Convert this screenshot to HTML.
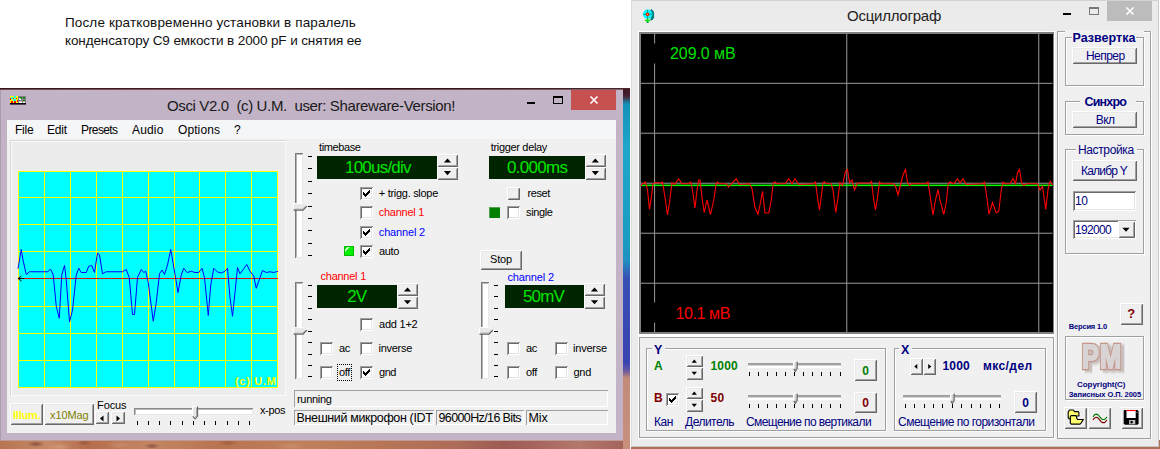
<!DOCTYPE html>
<html lang="ru"><head><meta charset="utf-8"><title>Osci</title>
<style>
html,body{margin:0;padding:0;}
body{width:1160px;height:449px;overflow:hidden;background:#fff;position:relative;font-family:"Liberation Sans",sans-serif;}
div,span,svg{position:absolute;box-sizing:border-box;}
.t{white-space:pre;}
.cb{background:#fff;box-shadow:inset 1px 1px 0 #a0a0a0,inset -1px -1px 0 #fff,inset 2px 2px 0 #696969,inset -2px -2px 0 #e3e3e3;}
.btn{background:#f0f0f0;box-shadow:inset 1px 1px 0 #fff,inset -1px -1px 0 #696969,inset 2px 2px 0 #e9e9e9,inset -2px -2px 0 #a0a0a0;}
.sunk{box-shadow:inset 1px 1px 0 #a0a0a0,inset -1px -1px 0 #fff;}
.sunk2{background:#fff;box-shadow:inset 1px 1px 0 #a0a0a0,inset -1px -1px 0 #fff,inset 2px 2px 0 #696969,inset -2px -2px 0 #e3e3e3;}
.grp{box-shadow:inset 1px 1px 0 #a0a0a0,inset -1px -1px 0 #fff,inset 2px 2px 0 #fff;border-right:0;}
.disp{background:#002400;}

</style></head>
<body>
<div class="" style="left:0px;top:88px;width:630px;height:361px;background:radial-gradient(ellipse 9px 3px at 36px 356px,rgba(90,40,30,.55),transparent),radial-gradient(ellipse 7px 2.5px at 84px 355px,rgba(100,50,35,.4),transparent),radial-gradient(ellipse 8px 3px at 152px 358px,rgba(90,40,30,.5),transparent),radial-gradient(ellipse 10px 3px at 228px 355px,rgba(110,55,40,.35),transparent),radial-gradient(ellipse 12px 4px at 60px 359px,rgba(225,170,140,.5),transparent),radial-gradient(ellipse 14px 4px at 120px 357px,rgba(220,165,135,.4),transparent),radial-gradient(ellipse 16px 4px at 290px 358px,rgba(215,160,130,.4),transparent),linear-gradient(90deg,#b87452 0,#c68a68 8%,#b46c4c 14%,#c48664 24%,#b8734f 35%,#c0805c 48%,#b87656 60%,#ae6c58 72%,#9c5c54 80%,#a86860 86%,#b4786c 92%,#a06058 100%);"></div>
<div class="" style="left:622.5px;top:88px;width:7.5px;height:361px;background:linear-gradient(180deg,#3a1820 0px,#4a2030 8px,#1590b8 16px,#1fa6c8 60px,#1b9cc0 150px,#2090c0 172px,#3850b4 190px,#3a44b0 275px,#6a5aa0 283px,#c48c78 290px,#c8907c 361px);"></div>
<div class="" style="left:631px;top:440px;width:529px;height:9px;background:#b07058;"></div>
<div class="" style="left:0px;top:89px;width:622.5px;height:351px;background:#c2b3c6;box-shadow:inset 1px 0 0 #a99cad;"></div>
<div class="" style="left:0px;top:440px;width:622.5px;height:1px;background:#bd9a94;"></div>
<div class="" style="left:0px;top:88px;width:630px;height:1px;background:linear-gradient(90deg,#3a1418,#4a2024 40%,#2a1014 60%,#50282c);"></div>
<div class="" style="left:0px;top:89px;width:622.5px;height:1px;background:linear-gradient(90deg,#6a4a50,#7a5a60 40%,#60444c 60%,#806068);"></div>
<svg style="left:10px;top:96px;" width="16" height="9" viewBox="0 0 16 9"><rect x="0" y="0" width="8" height="7" fill="#ffff00"/><rect x="8" y="0" width="8" height="7" fill="#808080"/><rect x="1" y="1" width="2" height="2" fill="#00ffff"/><rect x="4" y="0" width="2" height="2" fill="#00ffff"/><rect x="3" y="3" width="3" height="2" fill="#00ffff"/><rect x="0" y="2" width="1" height="2" fill="#f00"/><rect x="3" y="2" width="1" height="1" fill="#f00"/><rect x="6" y="2" width="1" height="1" fill="#f00"/><rect x="1" y="5" width="2" height="2" fill="#f00"/><rect x="4" y="5" width="2" height="2" fill="#f00"/><rect x="7" y="4" width="1" height="2" fill="#f00"/><rect x="10" y="1" width="2" height="1.5" fill="#008000"/><rect x="13" y="1" width="2" height="1.5" fill="#008000"/><rect x="13" y="4" width="2" height="1.5" fill="#008000"/><rect x="9" y="2.5" width="2" height="1.5" fill="#fff"/><rect x="9" y="5.5" width="3" height="1.5" fill="#fff"/><rect x="13" y="5.5" width="2" height="1.5" fill="#fff"/><rect x="0" y="7" width="16" height="1.6" fill="#000"/></svg>
<span class="t" style="left:167px;top:96.92px;font-size:15px;color:#1a1a1a;line-height:17.23px;letter-spacing:-0.361px;">Osci V2.0  (c) U.M.  user: Shareware-Version!</span>
<div class="" style="left:526.5px;top:102px;width:8px;height:2px;background:#000;"></div>
<div class="" style="left:553px;top:96px;width:10px;height:8px;border:1px solid #000;border-top-width:2px;"></div>
<div class="" style="left:571px;top:90px;width:45px;height:19.5px;background:#c75050;"></div>
<svg style="left:589px;top:94.5px;" width="10" height="10" viewBox="0 0 10 10"><path d="M1.5 1.5 L8.5 8.5 M8.5 1.5 L1.5 8.5" stroke="#fff" stroke-width="1.6" fill="none"/></svg>
<div class="" style="left:7px;top:119.5px;width:608.5px;height:313.7px;background:#f0f0f0;"></div>
<div class="" style="left:7px;top:119.5px;width:608.5px;height:19.5px;background:#f5f6f7;"></div>
<span class="t" style="left:15px;top:123.54px;font-size:12px;color:#000;line-height:13.79px;letter-spacing:-0.209px;">File</span>
<span class="t" style="left:47px;top:123.54px;font-size:12px;color:#000;line-height:13.79px;letter-spacing:-0.169px;">Edit</span>
<span class="t" style="left:81px;top:123.54px;font-size:12px;color:#000;line-height:13.79px;letter-spacing:-0.597px;">Presets</span>
<span class="t" style="left:132px;top:123.54px;font-size:12px;color:#000;line-height:13.79px;letter-spacing:0.162px;">Audio</span>
<span class="t" style="left:178px;top:123.54px;font-size:12px;color:#000;line-height:13.79px;letter-spacing:0.092px;">Options</span>
<span class="t" style="left:234px;top:123.54px;font-size:12px;color:#000;line-height:13.79px;">?</span>
<div class="" style="left:10px;top:140px;width:276px;height:255.5px;box-shadow:inset 1px 1px 0 #dadada,inset -1px -1px 0 #fafafa,inset 2px 2px 0 #fbfbfb;background:#ececec;"></div>
<svg style="left:17px;top:170px;" width="262" height="219" viewBox="0 0 262 219"><rect x="1" y="1" width="260" height="217" fill="#00ffff"/><rect x="1" y="1" width="1" height="217" fill="#ffff00"/><rect x="27" y="1" width="1" height="217" fill="#ffff00"/><rect x="53" y="1" width="1" height="217" fill="#ffff00"/><rect x="79" y="1" width="1" height="217" fill="#ffff00"/><rect x="105" y="1" width="1" height="217" fill="#ffff00"/><rect x="131" y="1" width="1" height="217" fill="#ffff00"/><rect x="157" y="1" width="1" height="217" fill="#ffff00"/><rect x="182" y="1" width="1" height="217" fill="#ffff00"/><rect x="208" y="1" width="1" height="217" fill="#ffff00"/><rect x="234" y="1" width="1" height="217" fill="#ffff00"/><rect x="260" y="1" width="1" height="217" fill="#ffff00"/><rect x="1" y="1" width="260" height="1" fill="#ffff00"/><rect x="1" y="27" width="260" height="1" fill="#ffff00"/><rect x="1" y="54" width="260" height="1" fill="#ffff00"/><rect x="1" y="81" width="260" height="1" fill="#ffff00"/><rect x="1" y="136" width="260" height="1" fill="#ffff00"/><rect x="1" y="163" width="260" height="1" fill="#ffff00"/><rect x="1" y="190" width="260" height="1" fill="#ffff00"/><rect x="1" y="217" width="260" height="1" fill="#ffff00"/><rect x="1" y="108" width="260" height="1" fill="#d81010"/><path d="M1 108.5 L4.5 106 M1 108.5 L4.5 111 M1 108.5 H7" stroke="#200000" stroke-width="1" fill="none"/><polyline points="1.00,98.75 4.25,79.50 6.00,90.00 9.25,104.50 12.50,101.75 30.50,101.75 33.75,99.25 36.25,105.00 39.25,136.25 42.25,148.25 44.75,105.00 47.50,95.50 49.25,110.00 52.50,152.00 55.50,140.00 59.25,105.00 61.75,98.25 64.25,102.50 69.25,102.50 71.75,96.25 74.75,95.50 77.50,102.50 80.50,83.00 82.50,85.00 85.50,103.75 89.25,101.75 105.50,101.75 109.25,99.50 112.25,107.50 115.50,144.50 117.50,144.50 120.50,107.50 124.25,99.50 126.75,102.50 128.75,101.25 131.25,112.50 136.25,151.25 139.25,132.50 142.50,103.75 145.00,100.00 147.50,104.50 150.50,95.00 153.75,79.50 156.00,92.50 161.00,122.50 164.25,105.00 166.75,98.25 170.00,102.50 174.25,101.25 178.00,102.50 181.75,102.50 185.00,98.25 187.50,107.50 191.25,145.50 193.75,115.00 196.75,98.25 200.50,102.00 204.25,103.00 208.00,101.25 210.50,98.25 213.00,127.50 215.50,146.25 218.00,122.50 220.50,97.50 223.00,103.75 226.75,98.75 229.75,94.50 233.00,101.25 236.75,106.25 239.25,118.25 241.75,111.25 245.50,100.50 249.25,102.50 253.00,101.75 256.75,102.50 261.00,101.25" fill="none" stroke="#0000ff" stroke-width="1.0" stroke-linejoin="miter"/></svg>
<span class="t" style="left:235px;top:374.65px;font-size:11px;color:#ffff00;line-height:12.64px;font-weight:bold;letter-spacing:0.691px;">(c) U.M</span>
<div class="btn" style="left:10px;top:403px;width:33px;height:21.5px;"></div>
<span class="t" style="left:13px;top:408.55px;font-size:11px;color:#ffff00;line-height:12.64px;font-weight:bold;letter-spacing:-0.204px;">Illum.</span>
<div class="btn" style="left:44px;top:403px;width:50px;height:21.5px;"></div>
<span class="t" style="left:50px;top:408.55px;font-size:11px;color:#808000;line-height:12.64px;letter-spacing:-0.106px;">x10Mag</span>
<span class="t" style="left:97px;top:399.05px;font-size:11px;color:#000;line-height:12.64px;letter-spacing:-0.091px;">Focus</span>
<div class="btn" style="left:94.6px;top:411.3px;width:14.8px;height:12.7px;"></div>
<div class="btn" style="left:110.8px;top:411.3px;width:14.7px;height:12.7px;"></div>
<svg style="left:95px;top:411.5px;" width="30" height="13" viewBox="0 0 30 13"><polygon points="8.5,3.5 8.5,9.5 5.0,6.5" fill="#000"/><polygon points="21.5,3.5 21.5,9.5 25.0,6.5" fill="#000"/></svg>
<div class="" style="left:134px;top:408px;width:118.5px;height:7px;background:#fff;box-shadow:inset 1px 1px 0 #8a8a8a,inset -1px -1px 0 #e8e8e8,inset 2px 2px 0 #b8b8b8;"></div>
<div class="" style="left:137px;top:421px;width:1px;height:4px;background:#000;"></div>
<div class="" style="left:148px;top:421px;width:1px;height:4px;background:#000;"></div>
<div class="" style="left:159px;top:421px;width:1px;height:4px;background:#000;"></div>
<div class="" style="left:170px;top:421px;width:1px;height:4px;background:#000;"></div>
<div class="" style="left:182px;top:421px;width:1px;height:4px;background:#000;"></div>
<div class="" style="left:193px;top:421px;width:1px;height:4px;background:#000;"></div>
<div class="" style="left:204px;top:421px;width:1px;height:4px;background:#000;"></div>
<div class="" style="left:215px;top:421px;width:1px;height:4px;background:#000;"></div>
<div class="" style="left:227px;top:421px;width:1px;height:4px;background:#000;"></div>
<div class="" style="left:238px;top:421px;width:1px;height:4px;background:#000;"></div>
<div class="" style="left:249px;top:421px;width:1px;height:4px;background:#000;"></div>
<svg style="left:192px;top:406px;" width="7" height="15" viewBox="0 0 7 15"><path d="M0.5 0.5 H5.5 V10 L3.0 13 L0.5 10 Z" fill="#e8e8e8"/><path d="M0.5 10 V0.5 H5.5" stroke="#fff" fill="none"/><path d="M5.6 0.5 V10 L3.0 13 L0.8 10.4" stroke="#606060" fill="none" stroke-width="1.1"/><path d="M4.6 1.5 V9.6 L3.0 11.6" stroke="#a0a0a0" fill="none"/></svg>
<span class="t" style="left:260px;top:403.85px;font-size:11px;color:#000;line-height:12.64px;letter-spacing:-0.380px;">x-pos</span>
<div class="" style="left:294.5px;top:153px;width:8px;height:104.5px;background:#fff;box-shadow:inset 1px 1px 0 #7a7a7a,inset -1px -1px 0 #e8e8e8,inset 2px 2px 0 #b4b4b4;"></div>
<div class="" style="left:308px;top:156px;width:3.6px;height:1px;background:#000;"></div>
<div class="" style="left:308px;top:168px;width:3.6px;height:1px;background:#000;"></div>
<div class="" style="left:308px;top:181px;width:3.6px;height:1px;background:#000;"></div>
<div class="" style="left:308px;top:193px;width:3.6px;height:1px;background:#000;"></div>
<div class="" style="left:308px;top:206px;width:3.6px;height:1px;background:#000;"></div>
<div class="" style="left:308px;top:218px;width:3.6px;height:1px;background:#000;"></div>
<div class="" style="left:308px;top:230px;width:3.6px;height:1px;background:#000;"></div>
<div class="" style="left:308px;top:243px;width:3.6px;height:1px;background:#000;"></div>
<div class="" style="left:308px;top:255px;width:3.6px;height:1px;background:#000;"></div>
<svg style="left:292.5px;top:202.5px;" width="16" height="9" viewBox="0 0 16 9"><path d="M0.5 0.5 H10 L13.5 3.5 L10 7 H0.5 Z" fill="#e8e8e8" stroke="none"/><path d="M0.5 7 V0.5 H10" stroke="#fff" fill="none"/><path d="M0.5 7.2 H10 L13.8 3.2" stroke="#606060" fill="none" stroke-width="1.2"/><path d="M1.5 6.2 H9.6 L12.5 3.4" stroke="#a0a0a0" fill="none"/></svg>
<span class="t" style="left:319px;top:140.64px;font-size:11px;color:#000;line-height:12.64px;letter-spacing:-0.392px;">timebase</span>
<div class="disp" style="left:317px;top:155.5px;width:120px;height:23.3px;"></div>
<span class="t" style="left:345px;top:157.81px;font-size:17px;color:#00e400;line-height:19.53px;letter-spacing:-0.786px;">100us/div</span>
<div class="btn" style="left:437px;top:154.2px;width:21px;height:12.8px;"></div>
<div class="btn" style="left:437px;top:167px;width:21px;height:12.8px;"></div>
<svg style="left:437px;top:154.2px;" width="21" height="25.6" viewBox="0 0 21 25.6"><polygon points="6.9,8.5 14.1,8.5 10.5,4.4" fill="#000"/><polygon points="6.9,17.1 14.1,17.1 10.5,21.200000000000003" fill="#000"/></svg>
<div class="cb" style="left:360px;top:187px;width:13px;height:13px;"><svg width="13" height="13" viewBox="0 0 13 13" style="left:0;top:0" fill="#000"><rect x="3" y="5" width="1.05" height="3"/><rect x="4" y="6" width="1.05" height="3"/><rect x="5" y="7" width="1.05" height="3"/><rect x="6" y="6" width="1.05" height="3"/><rect x="7" y="5" width="1.05" height="3"/><rect x="8" y="4" width="1.05" height="3"/><rect x="9" y="3" width="1.05" height="3"/></svg></div>
<span class="t" style="left:378.8px;top:187.04px;font-size:11px;color:#000;line-height:12.64px;letter-spacing:-0.292px;">+ trigg. slope</span>
<div class="cb" style="left:360px;top:206px;width:13px;height:13px;"></div>
<span class="t" style="left:378.8px;top:206.04px;font-size:11px;color:#f00;line-height:12.64px;letter-spacing:-0.278px;">channel 1</span>
<div class="cb" style="left:360px;top:225.8px;width:13px;height:13px;"><svg width="13" height="13" viewBox="0 0 13 13" style="left:0;top:0" fill="#000"><rect x="3" y="5" width="1.05" height="3"/><rect x="4" y="6" width="1.05" height="3"/><rect x="5" y="7" width="1.05" height="3"/><rect x="6" y="6" width="1.05" height="3"/><rect x="7" y="5" width="1.05" height="3"/><rect x="8" y="4" width="1.05" height="3"/><rect x="9" y="3" width="1.05" height="3"/></svg></div>
<span class="t" style="left:378.8px;top:225.84px;font-size:11px;color:#00f;line-height:12.64px;letter-spacing:-0.167px;">channel 2</span>
<div class="cb" style="left:360px;top:245px;width:13px;height:13px;"><svg width="13" height="13" viewBox="0 0 13 13" style="left:0;top:0" fill="#000"><rect x="3" y="5" width="1.05" height="3"/><rect x="4" y="6" width="1.05" height="3"/><rect x="5" y="7" width="1.05" height="3"/><rect x="6" y="6" width="1.05" height="3"/><rect x="7" y="5" width="1.05" height="3"/><rect x="8" y="4" width="1.05" height="3"/><rect x="9" y="3" width="1.05" height="3"/></svg></div>
<span class="t" style="left:379px;top:245.24px;font-size:11px;color:#000;line-height:12.64px;letter-spacing:-0.352px;">auto</span>
<div class="" style="left:343.7px;top:245.8px;width:10.6px;height:10.2px;background:linear-gradient(135deg,#00f000 0,#00f000 14%,#d0ffd0 15%,#d0ffd0 30%,#00f000 32%);border:1px solid #00b800;"></div>
<span class="t" style="left:490.8px;top:140.64px;font-size:11px;color:#000;line-height:12.64px;letter-spacing:-0.333px;">trigger delay</span>
<div class="disp" style="left:489.3px;top:155.5px;width:95.7px;height:23.3px;"></div>
<span class="t" style="left:507px;top:157.81px;font-size:17px;color:#00e400;line-height:19.53px;letter-spacing:-0.700px;">0.000ms</span>
<div class="btn" style="left:585px;top:154.2px;width:20.7px;height:12.8px;"></div>
<div class="btn" style="left:585px;top:167px;width:20.7px;height:12.8px;"></div>
<svg style="left:585px;top:154.2px;" width="20.7" height="25.6" viewBox="0 0 20.7 25.6"><polygon points="6.75,8.5 13.95,8.5 10.35,4.4" fill="#000"/><polygon points="6.75,17.1 13.95,17.1 10.35,21.200000000000003" fill="#000"/></svg>
<div class="btn" style="left:507px;top:187px;width:12.5px;height:12.5px;"></div>
<span class="t" style="left:527.5px;top:187.04px;font-size:11px;color:#000;line-height:12.64px;letter-spacing:-0.391px;">reset</span>
<div class="" style="left:489px;top:207px;width:10.5px;height:10.5px;background:#008000;box-shadow:inset 1px 1px 0 #50a050;"></div>
<div class="cb" style="left:507px;top:206px;width:13px;height:13px;"></div>
<span class="t" style="left:526px;top:206.04px;font-size:11px;color:#000;line-height:12.64px;letter-spacing:-0.373px;">single</span>
<div class="btn" style="left:480px;top:249.5px;width:42px;height:20.5px;"></div>
<span class="t" style="left:490px;top:252.94px;font-size:11px;color:#000;line-height:12.64px;letter-spacing:-0.157px;">Stop</span>
<span class="t" style="left:320.5px;top:269.65px;font-size:11px;color:#f00;line-height:12.64px;letter-spacing:-0.245px;">channel 1</span>
<div class="" style="left:294.5px;top:282px;width:8px;height:97px;background:#fff;box-shadow:inset 1px 1px 0 #7a7a7a,inset -1px -1px 0 #e8e8e8,inset 2px 2px 0 #b4b4b4;"></div>
<div class="" style="left:308px;top:285px;width:3.6px;height:1px;background:#000;"></div>
<div class="" style="left:308px;top:296px;width:3.6px;height:1px;background:#000;"></div>
<div class="" style="left:308px;top:308px;width:3.6px;height:1px;background:#000;"></div>
<div class="" style="left:308px;top:319px;width:3.6px;height:1px;background:#000;"></div>
<div class="" style="left:308px;top:331px;width:3.6px;height:1px;background:#000;"></div>
<div class="" style="left:308px;top:342px;width:3.6px;height:1px;background:#000;"></div>
<div class="" style="left:308px;top:354px;width:3.6px;height:1px;background:#000;"></div>
<div class="" style="left:308px;top:365px;width:3.6px;height:1px;background:#000;"></div>
<div class="" style="left:308px;top:376px;width:3.6px;height:1px;background:#000;"></div>
<svg style="left:292.5px;top:327px;" width="16" height="9" viewBox="0 0 16 9"><path d="M0.5 0.5 H10 L13.5 3.5 L10 7 H0.5 Z" fill="#e8e8e8" stroke="none"/><path d="M0.5 7 V0.5 H10" stroke="#fff" fill="none"/><path d="M0.5 7.2 H10 L13.8 3.2" stroke="#606060" fill="none" stroke-width="1.2"/><path d="M1.5 6.2 H9.6 L12.5 3.4" stroke="#a0a0a0" fill="none"/></svg>
<div class="disp" style="left:317px;top:284.5px;width:80px;height:23.3px;"></div>
<span class="t" style="left:347.2px;top:286.92px;font-size:17px;color:#00e400;line-height:19.53px;letter-spacing:-0.797px;">2V</span>
<div class="btn" style="left:397px;top:283.3px;width:21px;height:12.85px;"></div>
<div class="btn" style="left:397px;top:296.15px;width:21px;height:12.85px;"></div>
<svg style="left:397px;top:283.3px;" width="21" height="25.7" viewBox="0 0 21 25.7"><polygon points="6.9,8.525 14.1,8.525 10.5,4.425" fill="#000"/><polygon points="6.9,17.174999999999997 14.1,17.174999999999997 10.5,21.275" fill="#000"/></svg>
<div class="cb" style="left:360px;top:318px;width:13px;height:13px;"></div>
<span class="t" style="left:379px;top:317.65px;font-size:11px;color:#000;line-height:12.64px;letter-spacing:-0.224px;">add 1+2</span>
<div class="cb" style="left:320px;top:342px;width:13px;height:13px;"></div>
<span class="t" style="left:339px;top:341.65px;font-size:11px;color:#000;line-height:12.64px;letter-spacing:-0.309px;">ac</span>
<div class="cb" style="left:360px;top:342px;width:13px;height:13px;"></div>
<span class="t" style="left:378.5px;top:341.65px;font-size:11px;color:#000;line-height:12.64px;letter-spacing:-0.280px;">inverse</span>
<div class="cb" style="left:320px;top:366px;width:13px;height:13px;"></div>
<span class="t" style="left:339px;top:365.65px;font-size:11px;color:#000;line-height:12.64px;letter-spacing:-0.344px;">off</span>
<div class="" style="left:337px;top:364px;width:14.5px;height:16.5px;border:1px dotted #000;"></div>
<div class="cb" style="left:360px;top:366px;width:13px;height:13px;"><svg width="13" height="13" viewBox="0 0 13 13" style="left:0;top:0" fill="#000"><rect x="3" y="5" width="1.05" height="3"/><rect x="4" y="6" width="1.05" height="3"/><rect x="5" y="7" width="1.05" height="3"/><rect x="6" y="6" width="1.05" height="3"/><rect x="7" y="5" width="1.05" height="3"/><rect x="8" y="4" width="1.05" height="3"/><rect x="9" y="3" width="1.05" height="3"/></svg></div>
<span class="t" style="left:379px;top:365.65px;font-size:11px;color:#000;line-height:12.64px;letter-spacing:-0.451px;">gnd</span>
<span class="t" style="left:507.5px;top:271.05px;font-size:11px;color:#00f;line-height:12.64px;letter-spacing:-0.134px;">channel 2</span>
<div class="" style="left:480.5px;top:282px;width:8px;height:97px;background:#fff;box-shadow:inset 1px 1px 0 #7a7a7a,inset -1px -1px 0 #e8e8e8,inset 2px 2px 0 #b4b4b4;"></div>
<div class="" style="left:494px;top:285px;width:3.6px;height:1px;background:#000;"></div>
<div class="" style="left:494px;top:296px;width:3.6px;height:1px;background:#000;"></div>
<div class="" style="left:494px;top:308px;width:3.6px;height:1px;background:#000;"></div>
<div class="" style="left:494px;top:319px;width:3.6px;height:1px;background:#000;"></div>
<div class="" style="left:494px;top:331px;width:3.6px;height:1px;background:#000;"></div>
<div class="" style="left:494px;top:342px;width:3.6px;height:1px;background:#000;"></div>
<div class="" style="left:494px;top:354px;width:3.6px;height:1px;background:#000;"></div>
<div class="" style="left:494px;top:365px;width:3.6px;height:1px;background:#000;"></div>
<div class="" style="left:494px;top:376px;width:3.6px;height:1px;background:#000;"></div>
<svg style="left:478.5px;top:327px;" width="16" height="9" viewBox="0 0 16 9"><path d="M0.5 0.5 H10 L13.5 3.5 L10 7 H0.5 Z" fill="#e8e8e8" stroke="none"/><path d="M0.5 7 V0.5 H10" stroke="#fff" fill="none"/><path d="M0.5 7.2 H10 L13.8 3.2" stroke="#606060" fill="none" stroke-width="1.2"/><path d="M1.5 6.2 H9.6 L12.5 3.4" stroke="#a0a0a0" fill="none"/></svg>
<div class="disp" style="left:504.5px;top:284.5px;width:79.7px;height:23.3px;"></div>
<span class="t" style="left:523px;top:286.92px;font-size:17px;color:#00e400;line-height:19.53px;letter-spacing:-0.852px;">50mV</span>
<div class="btn" style="left:584.2px;top:283.3px;width:21px;height:12.85px;"></div>
<div class="btn" style="left:584.2px;top:296.15px;width:21px;height:12.85px;"></div>
<svg style="left:584.2px;top:283.3px;" width="21" height="25.7" viewBox="0 0 21 25.7"><polygon points="6.9,8.525 14.1,8.525 10.5,4.425" fill="#000"/><polygon points="6.9,17.174999999999997 14.1,17.174999999999997 10.5,21.275" fill="#000"/></svg>
<div class="cb" style="left:507px;top:342px;width:13px;height:13px;"></div>
<span class="t" style="left:526px;top:341.65px;font-size:11px;color:#000;line-height:12.64px;letter-spacing:-0.309px;">ac</span>
<div class="cb" style="left:555px;top:342px;width:13px;height:13px;"></div>
<span class="t" style="left:573px;top:341.65px;font-size:11px;color:#000;line-height:12.64px;letter-spacing:-0.209px;">inverse</span>
<div class="cb" style="left:507px;top:366px;width:13px;height:13px;"></div>
<span class="t" style="left:526px;top:365.65px;font-size:11px;color:#000;line-height:12.64px;letter-spacing:-0.344px;">off</span>
<div class="cb" style="left:555px;top:366px;width:13px;height:13px;"></div>
<span class="t" style="left:573.5px;top:365.65px;font-size:11px;color:#000;line-height:12.64px;letter-spacing:-0.284px;">gnd</span>
<div class="sunk" style="left:294px;top:390px;width:314px;height:16.5px;"></div>
<span class="t" style="left:297px;top:393.05px;font-size:11px;color:#000;line-height:12.64px;letter-spacing:-0.314px;">running</span>
<div class="sunk" style="left:294px;top:409.5px;width:139.5px;height:15.5px;"></div>
<span class="t" style="left:296.5px;top:411.39px;font-size:12.5px;color:#000;line-height:14.36px;letter-spacing:-0.353px;">Внешний микрофон (IDT</span>
<div class="sunk" style="left:436px;top:409.5px;width:87.5px;height:15.5px;"></div>
<span class="t" style="left:438.5px;top:411.39px;font-size:12.5px;color:#000;line-height:14.36px;letter-spacing:-0.615px;">96000Hz/16 Bits</span>
<div class="sunk" style="left:526px;top:409.5px;width:82px;height:15.5px;"></div>
<span class="t" style="left:528.5px;top:411.39px;font-size:12.5px;color:#000;line-height:14.36px;letter-spacing:-0.147px;">Mix</span>
<span class="t" style="left:65px;top:15.18px;font-size:13.5px;color:#111;line-height:15.51px;letter-spacing:0.135px;">После кратковременно установки в паралель</span>
<span class="t" style="left:65px;top:32.78px;font-size:13.5px;color:#111;line-height:15.51px;letter-spacing:-0.114px;">конденсатору С9 емкости в 2000 pF и снятия ее</span>
<div class="" style="left:631px;top:0px;width:528px;height:447px;background:#ebebeb;box-shadow:inset 0 1px 0 #d2d2d2,inset 1px 0 0 #dcdcdc,inset -1px -1px 0 #c8c8c8;"></div>
<svg style="left:642px;top:8px;" width="14" height="16" viewBox="0 0 14 16"><path d="M8.2 2.3 L9.4 1 L10.9 2.6 L12.1 4.1 V9.5 L10.6 11.9 L8.5 12.5 Z" fill="#008080"/><circle cx="5.6" cy="6.3" r="4.7" fill="#00ffff"/><path d="M5.6 1.8 V10.8 M1.2 6.3 H10.2" stroke="#008080" stroke-width="0.9"/><rect x="4" y="4.9" width="3.1" height="2.9" fill="#f00"/><rect x="5" y="5.8" width="1.1" height="1.1" fill="#ff0"/><path d="M5.6 10.8 V15 M3 12.5 H8.2" stroke="#00e000" stroke-width="1.6" fill="none"/><rect x="4.8" y="14" width="1.6" height="1" fill="#008080"/></svg>
<span class="t" style="left:847px;top:6.72px;font-size:15px;color:#222;line-height:17.23px;letter-spacing:-0.241px;">Осциллограф</span>
<div class="" style="left:1063px;top:13px;width:8px;height:2px;background:#000;"></div>
<div class="" style="left:1089px;top:7px;width:10px;height:8px;border:1px solid #777;border-top-width:2px;"></div>
<div class="" style="left:1107px;top:1px;width:45px;height:19.5px;background:#bcbcbc;"></div>
<svg style="left:1125px;top:5.5px;" width="10" height="10" viewBox="0 0 10 10"><path d="M1.5 1.5 L8.5 8.5 M8.5 1.5 L1.5 8.5" stroke="#fff" stroke-width="1.6" fill="none"/></svg>
<div class="" style="left:638px;top:31px;width:514px;height:408.5px;background:#f0f0f0;"></div>
<div class="" style="left:638px;top:31px;width:417px;height:304.5px;background:#fff;"></div>
<div class="" style="left:639px;top:32px;width:414.5px;height:301.5px;background:#808080;"></div>
<div class="" style="left:641px;top:34px;width:411.5px;height:298px;background:#000;"></div>
<svg style="left:641px;top:34px;" width="411.5" height="298" viewBox="0 0 411.5 298"><rect x="13" y="0" width="1.1" height="298" fill="#8a8a8a"/><rect x="205.2" y="0" width="1.1" height="298" fill="#8a8a8a"/><rect x="397.2" y="0" width="1.1" height="298" fill="#8a8a8a"/><rect x="0" y="48.8" width="411.5" height="1.1" fill="#8a8a8a"/><rect x="0" y="98.7" width="411.5" height="1.1" fill="#8a8a8a"/><rect x="0" y="148.7" width="411.5" height="1.1" fill="#8a8a8a"/><rect x="0" y="198.7" width="411.5" height="1.1" fill="#8a8a8a"/><rect x="0" y="248.7" width="411.5" height="1.1" fill="#8a8a8a"/><rect x="12" y="9.5" width="3" height="20" fill="#000"/><rect x="12" y="268.5" width="3" height="20" fill="#000"/><rect x="0" y="150.6" width="411.5" height="1.5" fill="#00ff00"/><polyline points="-0.50,152.25 1.50,149.75 4.50,148.00 6.50,156.00 8.50,175.50 10.25,163.50 12.00,149.75 14.00,148.50 20.25,149.00 21.50,148.00 24.00,163.50 26.50,181.00 28.50,168.50 31.00,148.50 33.50,150.50 37.75,144.75 40.75,149.75 47.75,149.75 49.75,148.00 51.50,156.00 54.00,174.00 56.00,156.00 57.75,146.00 59.00,146.00 61.00,163.50 63.25,178.50 66.00,166.00 69.50,180.50 72.75,166.00 75.25,149.00 76.50,148.00 77.75,149.75 85.25,149.75 87.75,153.00 91.50,148.50 95.25,144.75 98.50,150.50 108.50,149.75 111.00,154.75 114.00,173.50 117.00,180.25 119.00,171.00 121.50,157.25 124.00,179.00 127.75,179.00 130.25,166.00 132.25,149.00 134.00,148.00 136.00,149.75 144.00,149.75 147.75,144.75 151.00,149.75 154.00,144.75 157.75,150.50 172.75,149.75 174.50,148.00 176.50,163.50 178.50,176.00 180.50,161.00 182.00,148.50 183.50,148.00 185.25,149.75 190.25,149.75 192.00,156.00 194.75,178.50 197.00,163.50 199.00,148.50 201.50,151.50 204.50,137.25 206.50,135.50 208.50,148.50 211.00,146.00 213.50,156.00 216.50,149.00 229.00,149.00 230.50,147.25 232.75,166.00 234.50,176.00 236.50,163.50 238.50,148.00 240.25,149.75 252.75,149.75 254.50,152.25 257.00,161.00 259.50,151.00 262.00,141.00 264.50,135.50 266.50,148.50 268.50,151.50 270.25,149.75 285.25,149.75 287.00,148.00 289.00,161.00 292.00,181.00 294.50,166.00 297.00,155.50 299.00,166.00 302.75,180.50 305.25,168.50 307.25,149.75 309.00,148.00 312.75,149.75 316.50,144.75 319.00,149.00 322.00,144.75 325.25,150.50 341.50,149.75 343.50,148.00 345.50,161.00 348.00,180.25 351.50,168.50 355.25,179.00 357.75,177.25 360.25,156.00 362.00,148.00 364.00,149.75 369.00,149.75 372.00,144.75 374.50,149.75 376.50,138.50 378.50,135.50 380.50,148.50 382.75,151.50 385.25,149.75 396.50,149.75 399.00,156.00 401.50,152.25 404.75,175.50 407.00,156.00 408.50,148.50 409.50,147.25 411.50,151.00" fill="none" stroke="#ff0000" stroke-width="1.1"/></svg>
<span class="t" style="left:670px;top:45.12px;font-size:16px;color:#00e000;line-height:18.38px;letter-spacing:-0.082px;">209.0 мВ</span>
<span class="t" style="left:675.5px;top:305.12px;font-size:16px;color:#ff0000;line-height:18.38px;letter-spacing:-0.394px;">10.1 мВ</span>
<div class="" style="left:638px;top:336px;width:417px;height:102.5px;box-shadow:inset 1px 1px 0 #fff,inset -1px -1px 0 #fff,inset 2px 2px 0 #a0a0a0,inset -2px -2px 0 #a0a0a0;background:#f0f0f0;"></div>
<div class="" style="left:647px;top:349px;width:239.5px;height:83px;border:1px solid #fff;"></div>
<div class="" style="left:646px;top:348px;width:239.5px;height:83px;border:1px solid #a0a0a0;"></div>
<div class="" style="left:652px;top:343px;width:13px;height:12px;background:#f0f0f0;"></div>
<span class="t" style="left:654px;top:343.49px;font-size:12.5px;color:#000080;line-height:14.36px;font-weight:bold;">Y</span>
<span class="t" style="left:654px;top:359.94px;font-size:12px;color:#008000;line-height:13.79px;font-weight:bold;">A</span>
<div class="btn" style="left:686px;top:355px;width:16.5px;height:12.25px;"></div>
<div class="btn" style="left:686px;top:367.25px;width:16.5px;height:12.25px;"></div>
<svg style="left:686px;top:355px;" width="16.5" height="24.5" viewBox="0 0 16.5 24.5"><polygon points="5.55,7.775 10.95,7.775 8.25,4.574999999999999" fill="#000"/><polygon points="5.55,16.724999999999998 10.95,16.724999999999998 8.25,19.925" fill="#000"/></svg>
<span class="t" style="left:710.5px;top:359.94px;font-size:12px;color:#008000;line-height:13.79px;font-weight:bold;letter-spacing:0.201px;">1000</span>
<div class="" style="left:747.5px;top:362.5px;width:93.5px;height:5px;background:linear-gradient(180deg,#9c9c9c 0,#a8a8a8 45%,#fff 55%,#fff 100%);"></div>
<div class="" style="left:749px;top:372px;width:1px;height:4px;background:#000;"></div>
<div class="" style="left:758px;top:372px;width:1px;height:4px;background:#000;"></div>
<div class="" style="left:767px;top:372px;width:1px;height:4px;background:#000;"></div>
<div class="" style="left:776px;top:372px;width:1px;height:4px;background:#000;"></div>
<div class="" style="left:785px;top:372px;width:1px;height:4px;background:#000;"></div>
<div class="" style="left:794px;top:372px;width:1px;height:4px;background:#000;"></div>
<div class="" style="left:803px;top:372px;width:1px;height:4px;background:#000;"></div>
<div class="" style="left:812px;top:372px;width:1px;height:4px;background:#000;"></div>
<div class="" style="left:821px;top:372px;width:1px;height:4px;background:#000;"></div>
<div class="" style="left:830px;top:372px;width:1px;height:4px;background:#000;"></div>
<div class="" style="left:840px;top:372px;width:1px;height:4px;background:#000;"></div>
<svg style="left:793px;top:360.5px;" width="5.6" height="12.5" viewBox="0 0 5.6 12.5"><path d="M0.5 0.5 H4.1 V7.5 L2.3 10.5 L0.5 7.5 Z" fill="#e8e8e8"/><path d="M0.5 7.5 V0.5 H4.1" stroke="#fff" fill="none"/><path d="M4.2 0.5 V7.5 L2.3 10.5 L0.8 7.9" stroke="#606060" fill="none" stroke-width="1.1"/><path d="M3.2 1.5 V7.1 L2.3 9.1" stroke="#a0a0a0" fill="none"/></svg>
<div class="btn" style="left:854px;top:359px;width:23px;height:22px;"></div>
<span class="t" style="left:862.163px;top:364.94px;font-size:12px;color:#008000;line-height:13.79px;font-weight:bold;">0</span>
<span class="t" style="left:654px;top:391.94px;font-size:12px;color:#800000;line-height:13.79px;font-weight:bold;">B</span>
<div class="cb" style="left:666px;top:393px;width:13px;height:13px;"><svg width="13" height="13" viewBox="0 0 13 13" style="left:0;top:0" fill="#000"><rect x="3" y="5" width="1.05" height="3"/><rect x="4" y="6" width="1.05" height="3"/><rect x="5" y="7" width="1.05" height="3"/><rect x="6" y="6" width="1.05" height="3"/><rect x="7" y="5" width="1.05" height="3"/><rect x="8" y="4" width="1.05" height="3"/><rect x="9" y="3" width="1.05" height="3"/></svg></div>
<div class="btn" style="left:686px;top:387px;width:16.5px;height:12.25px;"></div>
<div class="btn" style="left:686px;top:399.25px;width:16.5px;height:12.25px;"></div>
<svg style="left:686px;top:387px;" width="16.5" height="24.5" viewBox="0 0 16.5 24.5"><polygon points="5.55,7.775 10.95,7.775 8.25,4.574999999999999" fill="#000"/><polygon points="5.55,16.724999999999998 10.95,16.724999999999998 8.25,19.925" fill="#000"/></svg>
<span class="t" style="left:710.5px;top:391.94px;font-size:12px;color:#800000;line-height:13.79px;font-weight:bold;letter-spacing:0.326px;">50</span>
<div class="" style="left:747.5px;top:394.5px;width:93.5px;height:5px;background:linear-gradient(180deg,#9c9c9c 0,#a8a8a8 45%,#fff 55%,#fff 100%);"></div>
<div class="" style="left:749px;top:404px;width:1px;height:4px;background:#000;"></div>
<div class="" style="left:758px;top:404px;width:1px;height:4px;background:#000;"></div>
<div class="" style="left:767px;top:404px;width:1px;height:4px;background:#000;"></div>
<div class="" style="left:776px;top:404px;width:1px;height:4px;background:#000;"></div>
<div class="" style="left:785px;top:404px;width:1px;height:4px;background:#000;"></div>
<div class="" style="left:794px;top:404px;width:1px;height:4px;background:#000;"></div>
<div class="" style="left:803px;top:404px;width:1px;height:4px;background:#000;"></div>
<div class="" style="left:812px;top:404px;width:1px;height:4px;background:#000;"></div>
<div class="" style="left:821px;top:404px;width:1px;height:4px;background:#000;"></div>
<div class="" style="left:830px;top:404px;width:1px;height:4px;background:#000;"></div>
<div class="" style="left:840px;top:404px;width:1px;height:4px;background:#000;"></div>
<svg style="left:793px;top:392.5px;" width="5.6" height="12.5" viewBox="0 0 5.6 12.5"><path d="M0.5 0.5 H4.1 V7.5 L2.3 10.5 L0.5 7.5 Z" fill="#e8e8e8"/><path d="M0.5 7.5 V0.5 H4.1" stroke="#fff" fill="none"/><path d="M4.2 0.5 V7.5 L2.3 10.5 L0.8 7.9" stroke="#606060" fill="none" stroke-width="1.1"/><path d="M3.2 1.5 V7.1 L2.3 9.1" stroke="#a0a0a0" fill="none"/></svg>
<div class="btn" style="left:854px;top:391.5px;width:23px;height:21.5px;"></div>
<span class="t" style="left:862.163px;top:396.94px;font-size:12px;color:#800000;line-height:13.79px;font-weight:bold;">0</span>
<span class="t" style="left:654px;top:415.64px;font-size:12px;color:#000080;line-height:13.79px;letter-spacing:-0.430px;">Кан</span>
<span class="t" style="left:685px;top:415.64px;font-size:12px;color:#000080;line-height:13.79px;letter-spacing:-0.500px;">Делитель</span>
<span class="t" style="left:746px;top:415.64px;font-size:12px;color:#000080;line-height:13.79px;letter-spacing:-0.584px;">Смещение по вертикали</span>
<div class="" style="left:895px;top:349px;width:151.5px;height:83px;border:1px solid #fff;"></div>
<div class="" style="left:894px;top:348px;width:151.5px;height:83px;border:1px solid #a0a0a0;"></div>
<div class="" style="left:899px;top:343px;width:13px;height:12px;background:#f0f0f0;"></div>
<span class="t" style="left:901px;top:343.49px;font-size:12.5px;color:#000080;line-height:14.36px;font-weight:bold;">X</span>
<div class="btn" style="left:910px;top:358px;width:12.5px;height:17px;"></div>
<div class="btn" style="left:923px;top:358px;width:12.5px;height:17px;"></div>
<svg style="left:910px;top:358px;" width="26" height="17" viewBox="0 0 26 17"><polygon points="7.3,5.9 7.3,11.1 4.2,8.5" fill="#000"/><polygon points="18.2,5.9 18.2,11.1 21.3,8.5" fill="#000"/></svg>
<span class="t" style="left:942.5px;top:359.94px;font-size:12px;color:#000080;line-height:13.79px;font-weight:bold;letter-spacing:0.201px;">1000</span>
<span class="t" style="left:983px;top:359.94px;font-size:12px;color:#000080;line-height:13.79px;font-weight:bold;letter-spacing:0.408px;">мкс/дел</span>
<div class="" style="left:903px;top:394.5px;width:97.5px;height:5px;background:linear-gradient(180deg,#9c9c9c 0,#a8a8a8 45%,#fff 55%,#fff 100%);"></div>
<div class="" style="left:905px;top:404px;width:1px;height:4px;background:#000;"></div>
<div class="" style="left:914px;top:404px;width:1px;height:4px;background:#000;"></div>
<div class="" style="left:924px;top:404px;width:1px;height:4px;background:#000;"></div>
<div class="" style="left:933px;top:404px;width:1px;height:4px;background:#000;"></div>
<div class="" style="left:942px;top:404px;width:1px;height:4px;background:#000;"></div>
<div class="" style="left:952px;top:404px;width:1px;height:4px;background:#000;"></div>
<div class="" style="left:961px;top:404px;width:1px;height:4px;background:#000;"></div>
<div class="" style="left:971px;top:404px;width:1px;height:4px;background:#000;"></div>
<div class="" style="left:980px;top:404px;width:1px;height:4px;background:#000;"></div>
<div class="" style="left:990px;top:404px;width:1px;height:4px;background:#000;"></div>
<div class="" style="left:999px;top:404px;width:1px;height:4px;background:#000;"></div>
<svg style="left:950px;top:392.5px;" width="5.6" height="12.5" viewBox="0 0 5.6 12.5"><path d="M0.5 0.5 H4.1 V7.5 L2.3 10.5 L0.5 7.5 Z" fill="#e8e8e8"/><path d="M0.5 7.5 V0.5 H4.1" stroke="#fff" fill="none"/><path d="M4.2 0.5 V7.5 L2.3 10.5 L0.8 7.9" stroke="#606060" fill="none" stroke-width="1.1"/><path d="M3.2 1.5 V7.1 L2.3 9.1" stroke="#a0a0a0" fill="none"/></svg>
<div class="btn" style="left:1014px;top:391px;width:23px;height:22px;"></div>
<span class="t" style="left:1022.16px;top:396.94px;font-size:12px;color:#000080;line-height:13.79px;font-weight:bold;">0</span>
<span class="t" style="left:898px;top:415.64px;font-size:12px;color:#000080;line-height:13.79px;letter-spacing:-0.518px;">Смещение по горизонтали</span>
<div class="" style="left:1057px;top:31px;width:94px;height:408px;box-shadow:inset 1px 1px 0 #a0a0a0,inset -1px -1px 0 #a0a0a0,inset 2px 2px 0 #fff;background:#f0f0f0;"></div>
<div class="" style="left:1151px;top:31px;width:1px;height:408px;background:#fff;"></div>
<div class="" style="left:1065px;top:30px;width:78.5px;height:7px;background:#f0f0f0;"></div>
<div class="" style="left:1065.5px;top:38px;width:79px;height:49px;border:1px solid #fff;"></div>
<div class="" style="left:1064.5px;top:37px;width:79px;height:49px;border:1px solid #a0a0a0;"></div>
<div class="" style="left:1072px;top:33px;width:64px;height:12px;background:#f0f0f0;"></div>
<span class="t" style="left:1072.5px;top:31.49px;font-size:12.5px;color:#000080;line-height:14.36px;font-weight:bold;letter-spacing:0.026px;">Развертка</span>
<div class="btn" style="left:1072px;top:47px;width:65px;height:17px;"></div>
<span class="t" style="left:1086px;top:49.94px;font-size:12px;color:#000080;line-height:13.79px;letter-spacing:-0.560px;">Непрер</span>
<div class="" style="left:1065.5px;top:102px;width:79px;height:33.5px;border:1px solid #fff;"></div>
<div class="" style="left:1064.5px;top:101px;width:79px;height:33.5px;border:1px solid #a0a0a0;"></div>
<div class="" style="left:1079.5px;top:96px;width:56px;height:12px;background:#f0f0f0;"></div>
<span class="t" style="left:1084.5px;top:95.19px;font-size:12.5px;color:#000080;line-height:14.36px;font-weight:bold;letter-spacing:-0.831px;">Синхро</span>
<div class="btn" style="left:1072px;top:111px;width:65px;height:16.5px;"></div>
<span class="t" style="left:1095.7px;top:113.64px;font-size:12px;color:#000080;line-height:13.79px;letter-spacing:-0.530px;">Вкл</span>
<div class="" style="left:1065.5px;top:149.7px;width:79px;height:105.3px;border:1px solid #fff;"></div>
<div class="" style="left:1064.5px;top:148.7px;width:79px;height:105.3px;border:1px solid #a0a0a0;"></div>
<div class="" style="left:1076px;top:144px;width:61px;height:12px;background:#f0f0f0;"></div>
<span class="t" style="left:1078px;top:143.64px;font-size:12px;color:#000080;line-height:13.79px;letter-spacing:-0.375px;">Настройка</span>
<div class="btn" style="left:1072px;top:159.5px;width:65px;height:21px;"></div>
<span class="t" style="left:1081px;top:164.94px;font-size:12px;color:#000080;line-height:13.79px;letter-spacing:-0.782px;">Калибр Y</span>
<div class="sunk2" style="left:1072.5px;top:191px;width:63px;height:20px;"></div>
<span class="t" style="left:1075px;top:195.44px;font-size:12px;color:#000080;line-height:13.79px;letter-spacing:-0.424px;">10</span>
<div class="sunk2" style="left:1072.5px;top:219.5px;width:63px;height:19.5px;"></div>
<span class="t" style="left:1075px;top:223.64px;font-size:12px;color:#000080;line-height:13.79px;letter-spacing:-0.674px;">192000</span>
<div class="btn" style="left:1118px;top:221px;width:16.5px;height:17px;"></div>
<svg style="left:1118px;top:221px;" width="16.5" height="17" viewBox="0 0 16.5 17"><polygon points="4.4,6.7 11.6,6.7 8,10.8" fill="#000"/></svg>
<div class="btn" style="left:1120px;top:303px;width:23px;height:21.5px;"></div>
<span class="t" style="left:1127.23px;top:307.04px;font-size:13px;color:#800000;line-height:14.94px;font-weight:bold;">?</span>
<span class="t" style="left:1068.7px;top:322.71px;font-size:7.5px;color:#000080;line-height:8.62px;font-weight:bold;letter-spacing:-0.154px;">Версия 1.0</span>
<div class="" style="left:1065.5px;top:337px;width:79px;height:64px;border:1px solid #fff;"></div>
<div class="" style="left:1064.5px;top:336px;width:79px;height:64px;border:1px solid #a0a0a0;"></div>
<span class="t" style="left:1082.2px;top:334px;font-size:33.5px;line-height:46px;font-weight:bold;transform-origin:0 0;transform:scaleX(0.755);letter-spacing:1.5px;color:#c8c0c0;-webkit-text-stroke:5px #c8c0c0;filter:blur(1px);margin:2px 0 0 2.5px;">PM</span>
<span class="t" style="left:1082.2px;top:334px;font-size:33.5px;line-height:46px;font-weight:bold;transform-origin:0 0;transform:scaleX(0.755);letter-spacing:1.5px;color:#c4968a;-webkit-text-stroke:4.6px #c4968a;">PM</span>
<span class="t" style="left:1082.2px;top:334px;font-size:33.5px;line-height:46px;font-weight:bold;transform-origin:0 0;transform:scaleX(0.755);letter-spacing:1.5px;color:#d9d3d3;-webkit-text-stroke:2.2px #d9d3d3;">PM</span>
<span class="t" style="left:1077px;top:380.06px;font-size:8px;color:#000080;line-height:9.19px;font-weight:bold;letter-spacing:-0.032px;">Copyright(C)</span>
<span class="t" style="left:1068.7px;top:391.01px;font-size:7.5px;color:#000080;line-height:8.62px;font-weight:bold;letter-spacing:-0.068px;">Записных О.П. 2005</span>
<div class="btn" style="left:1064px;top:407px;width:23px;height:21.7px;"></div>
<svg style="left:1064px;top:407px;" width="23" height="21.7" viewBox="0 0 23 21.7"><path d="M4.2 5 L5 3.6 L5.8 3 H9 L10 3.6 L10.4 4.6 H14.2 L14.9 5.4 V9 H9 L7 11.8 H5 L4.2 10.8 Z" fill="#ffff70" stroke="#000" stroke-width="1.1" stroke-linejoin="round"/><path d="M6.3 9.4 L7.2 8.6 H11.6 L12.4 9.3 L12.8 11.3 L13.5 12.5 H19.4 L16.6 16.8 L15.6 17.2 H7.3 L6.3 16.2 Z" fill="#ffff70" stroke="#000" stroke-width="1.2" stroke-linejoin="round"/></svg>
<div class="btn" style="left:1088px;top:407px;width:23px;height:21.7px;"></div>
<svg style="left:1088px;top:407px;" width="23" height="21.7" viewBox="0 0 23 21.7"><path d="M4.9 9.8 L6.6 7.8 L8 7.2 L9.4 7.4 L10.8 8.7 L13.2 11.6 L14.6 12.5 L16.4 12.5 L17.6 11.6 L18.9 9.9" stroke="#008000" stroke-width="1.15" fill="none"/><path d="M4.9 12.9 L6.6 10.9 L8 10.3 L9.4 10.5 L10.8 11.8 L13.2 14.7 L14.6 15.6 L16.4 15.6 L17.6 14.7 L18.9 13" stroke="#800000" stroke-width="1.15" fill="none"/></svg>
<div class="btn" style="left:1120.5px;top:407px;width:22.7px;height:21.7px;"></div>
<svg style="left:1119.8px;top:407px;" width="22.7" height="21.7" viewBox="0 0 22.7 21.7"><path d="M4.4 3 H17.4 L18.6 4.2 V16.6 L17.6 17.7 H4.8 L3.7 16.6 V3.8 Z" fill="#000"/><rect x="6.5" y="3" width="9.2" height="8" fill="#fff"/><rect x="6.5" y="3" width="9.2" height="1.1" fill="#f00"/><rect x="9.1" y="13" width="6.2" height="4.3" fill="#c0c0c0"/><rect x="10.5" y="14" width="2.2" height="2.3" fill="#000"/><rect x="16.6" y="5" width="0.8" height="1" fill="#c0c0c0"/></svg>
</body></html>
